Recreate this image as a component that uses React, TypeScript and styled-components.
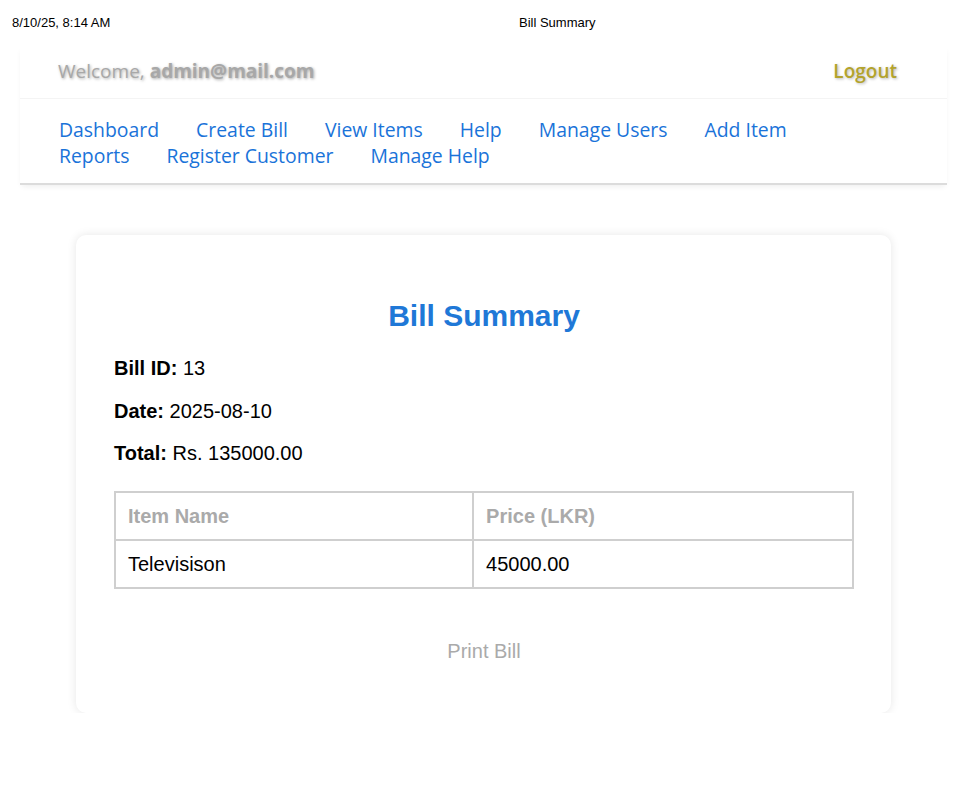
import React from "react";
import styled, { createGlobalStyle } from "styled-components";

const Global = createGlobalStyle`
  html, body { margin: 0; padding: 0; background: #fff; }
  body { font-family: "Liberation Sans", Arial, sans-serif; }
`;

const PrintHeader = styled.div`
  display: flex;
  align-items: center;
  height: 44px;
  padding: 0 12px;
  font-family: "Liberation Sans", Arial, sans-serif;
  font-size: 13px;
  color: #000;
`;

const PrintDate = styled.span`
  width: 507px;
`;

const Page = styled.div`
  padding: 0 15px 0 20px;
`;

const Header = styled.header`
  font-family: "Segoe UI", "Open Sans", sans-serif;
  background: #fff;
  box-shadow: 0 2px 0 #dcdcdc, 0 5px 6px -2px rgba(0, 0, 0, 0.08);
`;

const TopBar = styled.div`
  display: flex;
  justify-content: space-between;
  align-items: center;
  height: 54px;
  padding: 0 50px 0 38px;
  border-bottom: 1px solid #f4f4f4;
`;

const Welcome = styled.span`
  font-size: 19px;
  color: #a8a8a8;
  text-shadow: 1px 1px 3px rgba(0, 0, 0, 0.35);
  b { font-weight: 700; }
`;

const Logout = styled.span`
  font-size: 19px;
  font-weight: 600;
  color: #b3a32c;
  text-shadow: 1px 1px 3px rgba(0, 0, 0, 0.3);
`;

const Nav = styled.nav`
  display: flex;
  flex-wrap: wrap;
  column-gap: 37px;
  padding: 18px 80px 14px 39px;
  line-height: 26px;
`;

const NavLink = styled.a`
  font-size: 19.4px;
  color: #1a73d9;
  text-decoration: none;
`;

const Card = styled.main`
  margin: 52px 56px 0 56px;
  background: #fff;
  border-radius: 10px;
  box-shadow: 0 0 10px rgba(0, 0, 0, 0.1);
  padding: 54px 37px 23px 38px;
`;

const Title = styled.h2`
  margin: 10px 0 24px;
  text-align: center;
  font-size: 30px;
  font-weight: 700;
  color: #1f78d7;
`;

const InfoLine = styled.p`
  margin: 0 0 19.5px;
  font-size: 20px;
  color: #000;
  line-height: 23px;
  b { font-weight: 700; }
`;

const Table = styled.table`
  width: 100%;
  border-collapse: collapse;
  margin-top: 26px;
  font-size: 20px;
`;

const Th = styled.th`
  border: 2px solid #cfcfcf;
  padding: 11.5px 12px;
  text-align: left;
  color: #aaa;
  font-weight: 700;
`;

const Td = styled.td`
  border: 2px solid #cfcfcf;
  padding: 11.5px 12px;
  color: #000;
`;

const PrintButton = styled.button`
  display: block;
  margin: 50px auto 26px;
  background: none;
  border: none;
  font-family: "Liberation Sans", Arial, sans-serif;
  font-size: 20px;
  color: #aaa;
`;

const navItems = [
  "Dashboard",
  "Create Bill",
  "View Items",
  "Help",
  "Manage Users",
  "Add Item",
  "Reports",
  "Register Customer",
  "Manage Help",
];

export default function App() {
  return (
    <>
      <Global />
      <PrintHeader>
        <PrintDate>8/10/25, 8:14 AM</PrintDate>
        <span>Bill Summary</span>
      </PrintHeader>
      <Page>
        <Header>
          <TopBar>
            <Welcome>
              Welcome, <b>admin@mail.com</b>
            </Welcome>
            <Logout>Logout</Logout>
          </TopBar>
          <Nav>
            {navItems.map((n) => (
              <NavLink key={n} href="#">
                {n}
              </NavLink>
            ))}
          </Nav>
        </Header>
        <Card>
          <Title>Bill Summary</Title>
          <InfoLine>
            <b>Bill ID:</b> 13
          </InfoLine>
          <InfoLine>
            <b>Date:</b> 2025-08-10
          </InfoLine>
          <InfoLine>
            <b>Total:</b> Rs. 135000.00
          </InfoLine>
          <Table>
            <thead>
              <tr>
                <Th>Item Name</Th>
                <Th>Price (LKR)</Th>
              </tr>
            </thead>
            <tbody>
              <tr>
                <Td>Televisison</Td>
                <Td>45000.00</Td>
              </tr>
            </tbody>
          </Table>
          <PrintButton>Print Bill</PrintButton>
        </Card>
      </Page>
    </>
  );
}
